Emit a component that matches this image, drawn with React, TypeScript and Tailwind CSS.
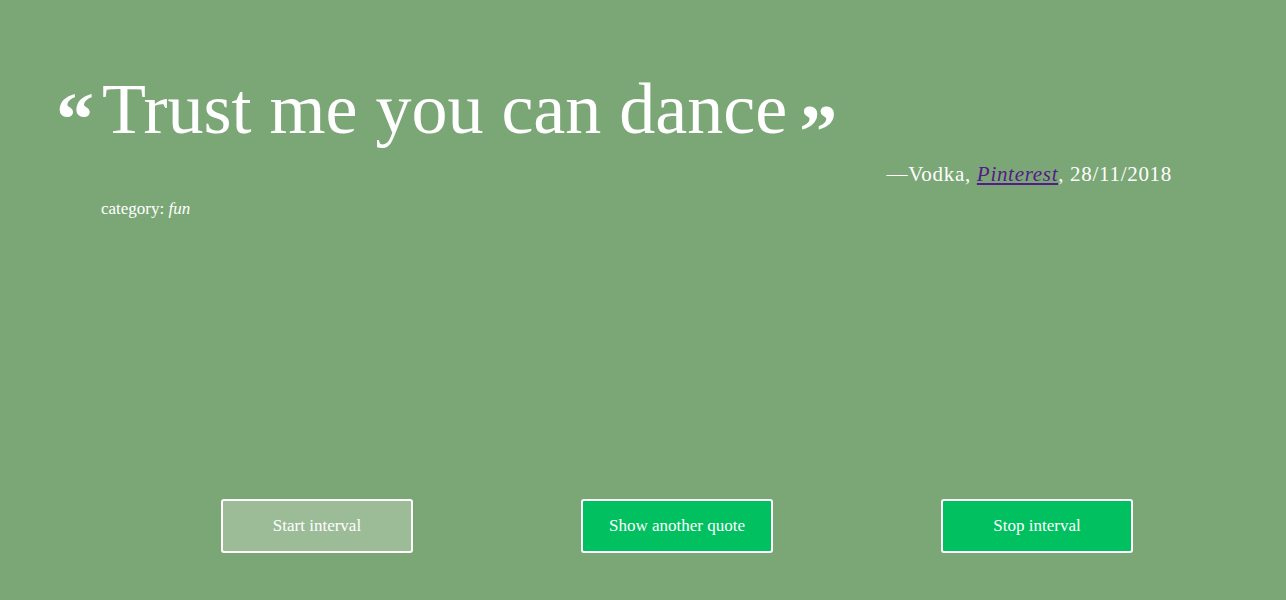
const BUTTONS = [
  { label: "Start interval", className: "bg-[#9cbc98]" },
  { label: "Show another quote", className: "bg-[#00c060]" },
  { label: "Stop interval", className: "bg-[#00c060]" },
];

const App = () => {
  return (
    <div className="w-full h-[600px] bg-[#7ba776] text-white font-['Liberation_Serif',serif] flex flex-col">
      <section className="pt-[64px] pl-[56px] pr-[114px]">
        <blockquote className="flex items-start h-[90px]">
          <span className="text-[76px] leading-none font-bold mt-[17px] mr-[8px]">“</span>
          <p className="text-[72px] leading-[90px]">Trust me you can dance</p>
          <span className="text-[76px] leading-none font-bold mt-[29px] ml-[12px]">”</span>
        </blockquote>
        <p className="text-right text-[21px] tracking-[0.7px] mt-[5px]">
          —Vodka,{" "}
          <a href="#" className="italic text-[#551a8b] underline">
            Pinterest
          </a>
          , 28/11/2018
        </p>
        <p className="pl-[45px] text-[17px] mt-[5px]">
          category: <em>fun</em>
        </p>
      </section>

      <div className="mt-auto mb-[47px] pl-[221px] flex gap-[168px]">
        {BUTTONS.map((b) => (
          <button
            key={b.label}
            className={`w-[192px] h-[54px] border-2 border-white rounded-[3px] text-[17px] text-white ${b.className}`}
          >
            {b.label}
          </button>
        ))}
      </div>
    </div>
  );
};

export default App;
